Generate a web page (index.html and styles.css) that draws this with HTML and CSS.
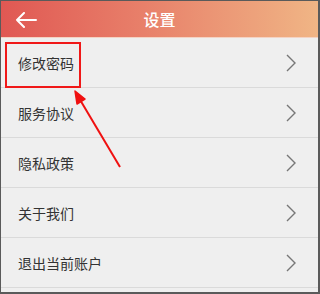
FILE: index.html
```html
<!DOCTYPE html>
<html lang="zh">
<head>
<meta charset="utf-8">
<link rel="stylesheet" href="styles.css">
</head>
<body>
<div class="frame">
  <header class="topbar">
    <svg class="back" width="22" height="16" viewBox="0 0 22 16"><path d="M21 8H2M9 1L2 8l7 7" fill="none" stroke="#fff" stroke-width="2" stroke-linecap="round" stroke-linejoin="round"/></svg>
    <h1 class="title">设置</h1>
  </header>
  <ul class="list">
    <li class="row"><span>修改密码</span><svg class="chev" width="10" height="18" viewBox="0 0 10 18"><path d="M1 1l8 8-8 8" fill="none" stroke="#777" stroke-width="1.4"/></svg></li>
    <li class="row"><span>服务协议</span><svg class="chev" width="10" height="18" viewBox="0 0 10 18"><path d="M1 1l8 8-8 8" fill="none" stroke="#777" stroke-width="1.4"/></svg></li>
    <li class="row"><span>隐私政策</span><svg class="chev" width="10" height="18" viewBox="0 0 10 18"><path d="M1 1l8 8-8 8" fill="none" stroke="#777" stroke-width="1.4"/></svg></li>
    <li class="row"><span>关于我们</span><svg class="chev" width="10" height="18" viewBox="0 0 10 18"><path d="M1 1l8 8-8 8" fill="none" stroke="#777" stroke-width="1.4"/></svg></li>
    <li class="row"><span>退出当前账户</span><svg class="chev" width="10" height="18" viewBox="0 0 10 18"><path d="M1 1l8 8-8 8" fill="none" stroke="#777" stroke-width="1.4"/></svg></li>
  </ul>
  <div class="highlight"></div>
  <svg class="pointer" width="320" height="294" viewBox="0 0 320 294"><path d="M120 167L76 93" stroke="#f01010" stroke-width="2" fill="none"/><path d="M75 91L77 104L85 99Z" fill="#f01010" stroke="#f01010" stroke-width="1.5" stroke-linejoin="round"/></svg>
</div>
</body>
</html>
```
FILE: styles.css
```css
html, body { margin: 0; padding: 0; }
body { width: 320px; height: 294px; overflow: hidden; font-family: "Noto Sans CJK SC", "Noto Sans", sans-serif; }
.frame {
  position: relative;
  box-sizing: border-box;
  width: 320px; height: 294px;
  border-style: solid;
  border-color: #5a5a5a;
  border-width: 1px 2px 2px 1px;
  background: #efefef;
}
.topbar {
  height: 36px;
  display: flex; align-items: center; justify-content: center;
  position: relative;
  background: linear-gradient(90deg, #e05853 0%, #e8806a 45%, #f0b585 100%);
  border-bottom: 1px solid #f4d3c4;
}
.back { position: absolute; left: 14px; top: 11px; }
.title { margin: 0; font-size: 16px; font-weight: 500; color: #fff; line-height: 1; }
.list { list-style: none; margin: 0; padding: 0; }
.row {
  box-sizing: border-box;
  height: 50px;
  display: flex; align-items: center; justify-content: space-between;
  padding: 0 22px 0 17px;
  border-bottom: 1px solid #dadada;
  font-size: 14px; color: #333;
}
.chev { display: block; }
.highlight {
  position: absolute; left: 4px; top: 41px;
  width: 72px; height: 42px;
  border: 2px solid #f01818;
}
.pointer { position: absolute; left: -1px; top: -1px; }
```
